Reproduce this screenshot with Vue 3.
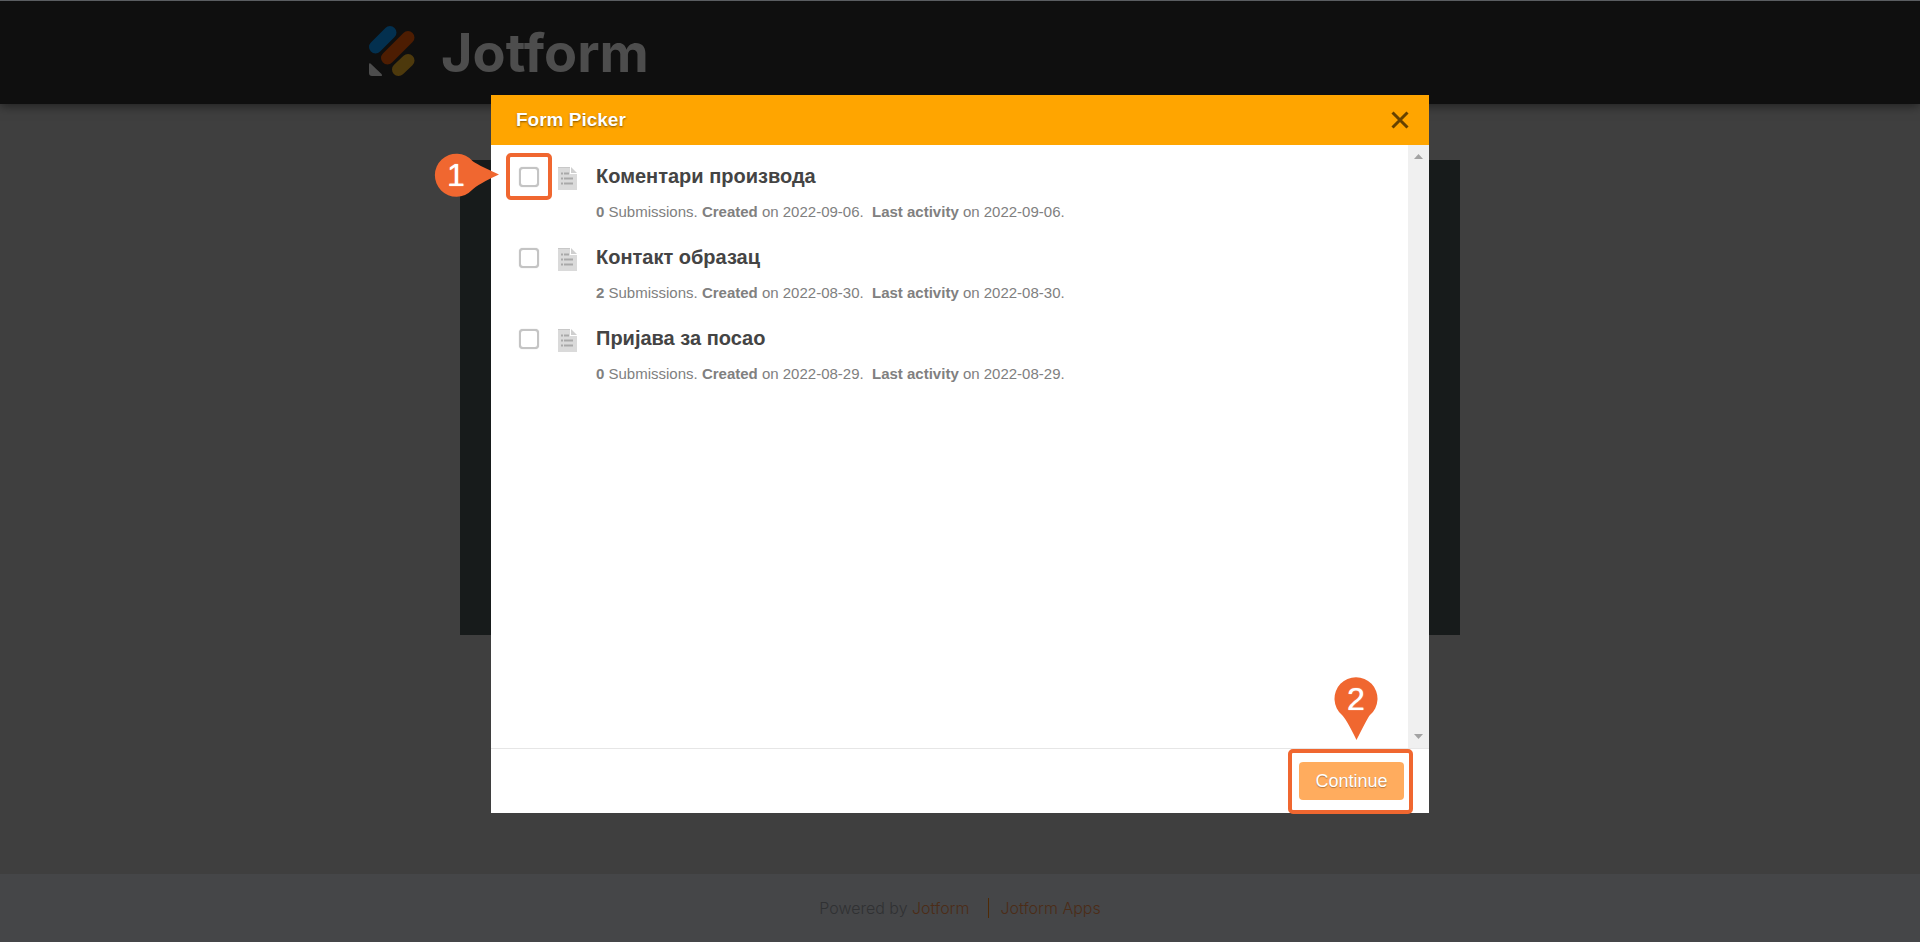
<script setup>
import { ref } from 'vue'

const forms = ref([
  { id: 1, title: 'Коментари производа', count: 0, created: '2022-09-06', active: '2022-09-06', picked: false },
  { id: 2, title: 'Контакт образац', count: 2, created: '2022-08-30', active: '2022-08-30', picked: false },
  { id: 3, title: 'Пријава за посао', count: 0, created: '2022-08-29', active: '2022-08-29', picked: false },
])
</script>

<template>
  <div class="page">
    <header class="site-header">
      <a class="brand" href="#">
        <svg class="brand-mark" width="46" height="50" viewBox="0 0 46 50" aria-hidden="true">
          <g fill="none" stroke-width="13" stroke-linecap="round">
            <path d="M6.500 21 21 6.500" stroke="#03304f" />
            <path d="M18.500 32 39 11.500" stroke="#4d1d02" />
            <path d="M29.500 43.500 39 34.500" stroke="#4d390c" />
          </g>
          <path d="M0 38.500Q0 36.500 1.500 37.500L12.500 48Q14 50 11.500 50H3Q0 50 0 47Z" fill="#4d4d4d" />
        </svg>
        <span class="brand-name">Jotform</span>
      </a>
    </header>
    <main class="content">
      <div class="panel"></div>
    </main>
    <footer class="site-footer">
      <span>Powered by <a href="#">Jotform</a></span>
      <a class="apps" href="#">Jotform Apps</a>
    </footer>

    <div class="overlay">
      <section class="modal" role="dialog" aria-labelledby="picker-title">
        <div class="modal-head">
          <h1 id="picker-title">Form Picker</h1>
          <button class="close" type="button" aria-label="Close">
            <svg width="18" height="18" viewBox="0 0 18 18" aria-hidden="true">
              <path d="M1.500 1.500 16.500 16.500M16.500 1.500 1.500 16.500" stroke="#664200" stroke-width="3" />
            </svg>
          </button>
        </div>
        <div class="modal-body">
          <ul class="forms">
            <li v-for="(form, i) in forms" :key="form.id" class="form-row">
              <div class="pick">
                <input :id="'form-' + form.id" v-model="form.picked" type="checkbox" />
                <template v-if="i === 0">
                  <span class="frame frame-pick"></span>
                  <span class="marker marker-one">
                    <svg width="66" height="44" viewBox="0 0 66 44" aria-hidden="true">
                      <path d="M38.500 8Q41 10.500 65 21.500Q44 31 38 37A21.500 21.500 0 1 1 38.500 8Z" fill="#f06730" />
                    </svg>
                    <span class="digit">1</span>
                  </span>
                </template>
              </div>
              <svg class="doc" width="19" height="23" viewBox="0 0 19 23" aria-hidden="true">
                <path d="M0 0H12V7H19V23H0Z" fill="#dadada" />
                <path d="M0 .5H12" stroke="#c8c8c8" />
                <path d="M13 0 19 6H13Z" fill="#cfcfcf" />
                <path d="M3 6.500h2M6 6.500h5M3 11.500h2M6 11.500h9M3 16.500h2M6 16.500h9" stroke="#a9a9a9" stroke-width="2" />
              </svg>
              <div class="info">
                <label :for="'form-' + form.id">{{ form.title }}</label>
                <p>
                  <b>{{ form.count }}</b> Submissions. <b>Created</b> on {{ form.created }}.&nbsp; <b>Last activity</b> on {{ form.active }}.
                </p>
              </div>
            </li>
          </ul>
          <div class="scrollbar" aria-hidden="true">
            <svg width="9" height="5" viewBox="0 0 9 5"><path d="M0 5 4.500 0 9 5Z" fill="#a3a3a3" /></svg>
            <svg width="9" height="5" viewBox="0 0 9 5"><path d="M0 0 4.500 5 9 0Z" fill="#a3a3a3" /></svg>
          </div>
        </div>
        <div class="modal-foot">
          <div class="action">
            <button class="continue" type="button">Continue</button>
            <span class="frame frame-continue"></span>
            <span class="marker marker-two">
              <svg width="44" height="64" viewBox="0 0 44 64" aria-hidden="true">
                <path d="M8 38A21.500 21.500 0 1 1 36 38Q34 40 22.500 63Q12 41.500 8 38Z" fill="#f06730" />
              </svg>
              <span class="digit">2</span>
            </span>
          </div>
        </div>
      </section>
    </div>
  </div>
</template>

<style>
body {
  margin: 0;
  background: #3f3f3f;
}
</style>

<style scoped>
.page {
  position: relative;
  display: flex;
  flex-direction: column;
  min-height: 100vh;
  font-family: "Liberation Sans", Arial, sans-serif;
}
.site-header {
  box-sizing: border-box;
  height: 104px;
  padding: 0 20px;
  border-top: 1px solid #5a5d61;
  background: #0f0f0f;
  box-shadow: 0 2px 10px rgba(0, 0, 0, 0.5);
}
.brand {
  display: flex;
  align-items: center;
  gap: 26px;
  max-width: 1182px;
  height: 100px;
  margin: 0 auto;
  text-decoration: none;
}
.brand-name {
  padding-top: 4px;
  color: #4d4d4d;
  font: 700 54px/60px Inter, sans-serif;
}
.content {
  flex: 1;
  padding: 56px 20px;
}
.panel {
  max-width: 1000px;
  height: 475px;
  margin: 0 auto;
  background: #171b1b;
}
.site-footer {
  display: flex;
  align-items: center;
  justify-content: center;
  gap: 18px;
  height: 68px;
  background: #454648;
  color: #303133;
  font: 300 16px/20px Inter, sans-serif;
}
.site-footer a {
  color: #4c2c17;
  text-decoration: none;
}
.site-footer .apps {
  padding-left: 12px;
  border-left: 1px solid #4f2a05;
}
.overlay {
  position: absolute;
  inset: 0;
  padding: 95px 20px 0;
}
.modal {
  max-width: 938px;
  margin: 0 auto;
  background: #fff;
}
.modal-head {
  display: flex;
  align-items: center;
  justify-content: space-between;
  height: 50px;
  padding: 0 20px 0 25px;
  background: #ffa500;
}
.modal-head h1 {
  margin: 0;
  color: #fff;
  font-size: 19px;
  line-height: 24px;
  text-shadow: 0 1px 2px rgba(0, 0, 0, 0.5);
}
.close {
  display: flex;
  padding: 0;
  border: 0;
  background: none;
}
.modal-body {
  display: flex;
  min-height: 64vh;
  border-bottom: 1px solid #e6e6e6;
}
.forms {
  flex: 1;
  display: flex;
  flex-direction: column;
  gap: 22px;
  margin: 0;
  padding: 18px 28px;
  list-style: none;
}
.form-row {
  display: flex;
}
.pick {
  position: relative;
  width: 20px;
  height: 20px;
  margin: 4px 19px 0 0;
}
.pick input {
  display: block;
  box-sizing: border-box;
  width: 20px;
  height: 20px;
  margin: 0;
  appearance: none;
  border: 2px solid #c4c4c4;
  border-radius: 4px;
  background: #fff;
  box-shadow: 0 0 1px #bbb;
}
.doc {
  margin: 4px 19px 0 0;
}
.info label {
  display: block;
  color: #444;
  font-size: 20px;
  font-weight: 700;
  line-height: 26px;
}
.info p {
  margin: 13px 0 0;
  color: #808080;
  font-size: 15px;
  line-height: 20px;
}
.scrollbar {
  display: flex;
  flex-direction: column;
  align-items: center;
  justify-content: space-between;
  width: 21px;
  padding: 9px 0;
  box-sizing: border-box;
  background: #f0f0f0;
}
.modal-foot {
  display: flex;
  justify-content: flex-end;
  padding: 13px 25px;
}
.action {
  position: relative;
}
.continue {
  display: block;
  width: 105px;
  height: 38px;
  padding: 0;
  border: 0;
  border-radius: 4px;
  background: #ffac5e;
  color: #fff;
  font: 400 18px/24px "Liberation Sans", Arial, sans-serif;
  text-shadow: 0 1px 1px rgba(0, 0, 0, 0.3);
}
.frame {
  position: absolute;
  box-sizing: border-box;
  border: 4px solid #f06730;
  border-radius: 5px;
  pointer-events: none;
}
.frame-pick {
  top: -14px;
  left: -13px;
  width: 46px;
  height: 47px;
}
.frame-continue {
  top: -13px;
  left: -11px;
  width: 125px;
  height: 65px;
}
.marker {
  position: absolute;
  pointer-events: none;
}
.marker svg {
  display: block;
}
.marker-one {
  top: -14px;
  left: -85px;
}
.marker-two {
  top: -85px;
  left: 35px;
}
.digit {
  position: absolute;
  top: 0;
  left: 0;
  width: 44px;
  color: #fff;
  font: 400 32px/44px "Liberation Sans", Arial, sans-serif;
  text-align: center;
  text-shadow: 0 0 1px #fff;
}
</style>
